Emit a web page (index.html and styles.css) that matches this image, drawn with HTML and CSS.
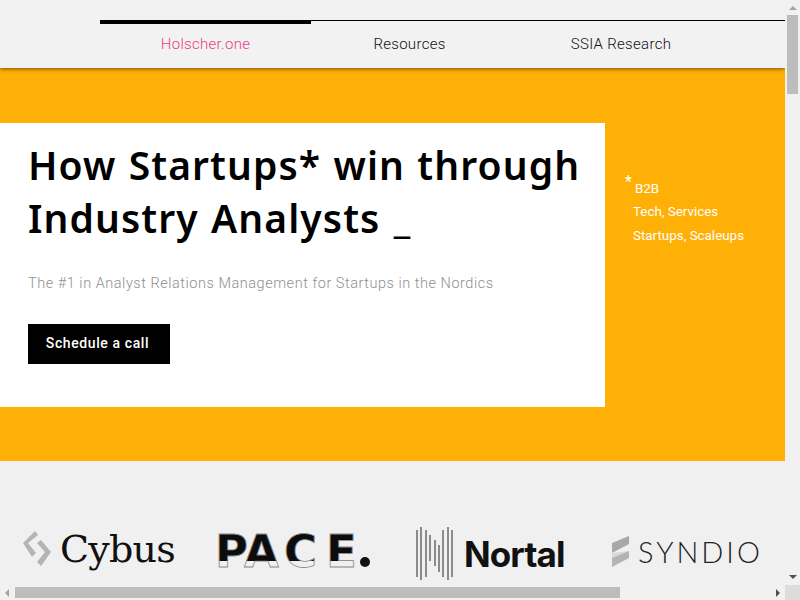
FILE: index.html
```html
<!DOCTYPE html>
<html lang="en">
<head>
  <meta charset="UTF-8">
  <meta name="viewport" content="width=device-width, initial-scale=1.0">
  <title>How Startups win through Industry Analysts</title>
  <link rel="stylesheet" href="styles.css">
</head>
<body>
  <div class="window">
    <div class="page">
      <header class="site-header">
        <nav class="tabs">
          <a class="tab tab-first active" href="#">Holscher.one</a>
          <a class="tab tab-second" href="#">Resources</a>
          <a class="tab tab-third" href="#">SSIA Research</a>
        </nav>
      </header>

      <section class="hero">
        <div class="hero-card">
          <h1>How Startups* win through<br>Industry Analysts <span class="cursor">_</span></h1>
          <p class="tagline">The #1 in Analyst Relations Management for Startups in the Nordics</p>
          <a class="cta" href="#">Schedule a call</a>
        </div>
        <div class="hero-note">
          <p class="note-first"><span class="star">*</span>B2B</p>
          <p>Tech, Services</p>
          <p>Startups, Scaleups</p>
        </div>
      </section>

      <section class="logos">
        <div class="logo logo-cybus">
          <svg width="28" height="36" viewBox="0 0 28 36" fill="#b4b4b4">
            <path d="M12 0 0 12 9 26l4-4L5 12 15 4z"/>
            <path d="M18 9 28 21 18 35l-4-4 8-10-8-9z"/>
          </svg>
          <span class="logo-name">Cybus</span>
        </div>
        <div class="logo logo-pace">
          <svg width="160" height="58" viewBox="0 0 160 58">
            <defs>
              <linearGradient id="pace-fill" gradientUnits="userSpaceOnUse" x1="0" y1="4" x2="0" y2="52">
                <stop offset="0.69" stop-color="#0c0c0c"/>
                <stop offset="0.69" stop-color="#f0f0f0"/>
              </linearGradient>
            </defs>
            <text class="pace-name" y="43" x="0 29 69 111" fill="url(#pace-fill)">PACE</text>
            <circle cx="150" cy="38" r="5" fill="#111"/>
          </svg>
        </div>
        <div class="logo logo-nortal">
          <svg width="38" height="53" viewBox="0 0 38 53" stroke="#8c8c8c" stroke-width="2">
            <path d="M2 3v47M6 0v53M11 3v47M15 8v26M20 13v26M24 18v27M28 3v47M33 0v53M37 3v47"/>
          </svg>
          <span class="logo-name">Nortal</span>
        </div>
        <div class="logo logo-syndio">
          <svg width="18" height="32" viewBox="0 0 18 32">
            <path d="M17 0v8L0 17V7z" fill="#a8a8a8"/>
            <path d="M0 17l17-2v7L0 22z" fill="#dadada"/>
            <path d="M17 15v7L0 31v-9z" fill="#b4b4b4"/>
          </svg>
          <span class="logo-name">SYNDIO</span>
        </div>
      </section>
    </div>

    <div class="scroll-y">
      <span class="arrow arrow-up"></span>
      <div class="thumb-y"></div>
      <span class="scroll-spacer"></span>
      <span class="arrow arrow-down"></span>
    </div>
    <div class="scroll-x">
      <span class="arrow arrow-left"></span>
      <div class="thumb-x"></div>
      <span class="scroll-spacer"></span>
      <span class="arrow arrow-right"></span>
    </div>
    <div class="scroll-corner"></div>
  </div>
</body>
</html>
```

FILE: styles.css
```css
body {
  font-family: Roboto, "Noto Sans", sans-serif;
  margin: 0;
  padding: 0;
  background-color: #f0f0f0;
}
.window {
  display: grid;
  grid-template-columns: 785px 15px;
  grid-template-rows: 585px 15px;
  width: 800px;
  height: 600px;
  overflow: hidden;
}
.page {
  overflow: hidden;
  background-color: #f0f0f0;
}

/* header */
.site-header {
  position: relative;
  z-index: 2;
  height: 68px;
  box-sizing: border-box;
  padding: 20px 0 0 100px;
  background-color: #f2f2f2;
  box-shadow: 0 1px 4px rgba(80, 50, 0, 0.75);
}
.tabs {
  display: grid;
  grid-template-columns: 211px 197px 226px;
  border-top: 1px solid #000;
}
.tab {
  display: block;
  height: 47px;
  box-sizing: border-box;
  padding-top: 14px;
  font-size: 15px;
  font-weight: 300;
  letter-spacing: 0.3px;
  line-height: 18px;
  text-align: center;
  color: #111;
  text-decoration: none;
}
.tab.active {
  margin-top: -1px;
  padding-top: 11px;
  height: 48px;
  border-top: 4px solid #000;
  color: #ee3a88;
}

/* hero */
.hero {
  display: flex;
  align-items: flex-start;
  height: 393px;
  box-sizing: border-box;
  padding-top: 55px;
  background-color: #ffb007;
}
.hero-card {
  width: 605px;
  height: 284px;
  box-sizing: border-box;
  padding: 15px 0 0 28px;
  background-color: #fff;
  flex-shrink: 0;
}
h1 {
  margin: 0;
  font-family: "Noto Sans", sans-serif;
  font-size: 39px;
  font-weight: 600;
  line-height: 53px;
  letter-spacing: 1.1px;
  word-spacing: 1px;
  color: #000;
}
.cursor {
  margin-left: 1px;
}
.tagline {
  margin: 30px 0 0;
  font-size: 14.5px;
  font-weight: 300;
  line-height: 20px;
  letter-spacing: 0.53px;
  color: #8f8f8f;
}
.cta {
  display: block;
  width: 142px;
  height: 40px;
  margin-top: 30px;
  padding-right: 3px;
  box-sizing: border-box;
  font-size: 14px;
  font-weight: 500;
  line-height: 38px;
  letter-spacing: 0.6px;
  text-align: center;
  color: #fff;
  background-color: #000;
  text-decoration: none;
}
.hero-note {
  padding: 53px 0 0 28px;
  color: #fff;
  font-size: 13.4px;
  line-height: 24px;
}
.hero-note p {
  margin: 0;
}
.hero-note .note-first {
  margin-left: -8px;
  line-height: 23px;
}
.star {
  position: relative;
  top: -6px;
  margin-right: 3px;
  font-size: 16px;
}

/* logos */
.logos {
  display: grid;
  grid-template-columns: 192px 200px 197px 1fr;
  align-items: start;
  height: 124px;
  box-sizing: border-box;
  padding: 60px 0 0 23px;
}
.logo {
  display: flex;
  align-items: center;
  color: #111;
}
.logo-cybus {
  margin-top: 10px;
  gap: 9px;
}
.logo-cybus .logo-name {
  font-family: "DejaVu Serif", serif;
  font-size: 38px;
  line-height: 36px;
  letter-spacing: -0.8px;
}
.logo-pace {
  margin-top: 3px;
}
.pace-name {
  font-family: "DejaVu Sans", sans-serif;
  font-size: 45px;
  font-weight: 700;
  stroke: #8c8c8c;
  stroke-width: 0.8;
}
.logo-nortal {
  margin-top: 6px;
  gap: 11px;
}
.logo-nortal .logo-name {
  font-family: Inter, sans-serif;
  font-size: 35px;
  font-weight: 700;
  letter-spacing: -0.9px;
}
.logo-syndio {
  margin-top: 13px;
  gap: 8px;
}
.logo-syndio .logo-name {
  font-family: Lato, sans-serif;
  font-size: 29px;
  font-weight: 300;
  letter-spacing: 3px;
  color: #222;
}

/* fake scrollbars */
.scroll-y, .scroll-x {
  display: flex;
  background-color: #f1f1f1;
}
.scroll-y {
  flex-direction: column;
  align-items: center;
}
.scroll-x {
  align-items: center;
}
.scroll-spacer {
  flex: 1;
}
.thumb-y {
  width: 11px;
  height: 79px;
  background-color: #bdbdbd;
}
.thumb-x {
  width: 605px;
  height: 11px;
  background-color: #bdbdbd;
}
.scroll-corner {
  background-color: #dcdcdc;
}
.arrow {
  display: block;
  width: 0;
  height: 0;
  flex-shrink: 0;
  border-style: solid;
  border-color: transparent;
}
.arrow-up {
  margin: 6px 0 5px;
  border-width: 0 4px 4px;
  border-bottom-color: #a3a3a3;
}
.arrow-down {
  margin: 5px 0 6px;
  border-width: 4px 4px 0;
  border-top-color: #505050;
}
.arrow-left {
  margin: 0 6px 0 5px;
  border-width: 4px 4px 4px 0;
  border-right-color: #a3a3a3;
}
.arrow-right {
  margin: 0 5px 0 6px;
  border-width: 4px 0 4px 4px;
  border-left-color: #505050;
}
```
